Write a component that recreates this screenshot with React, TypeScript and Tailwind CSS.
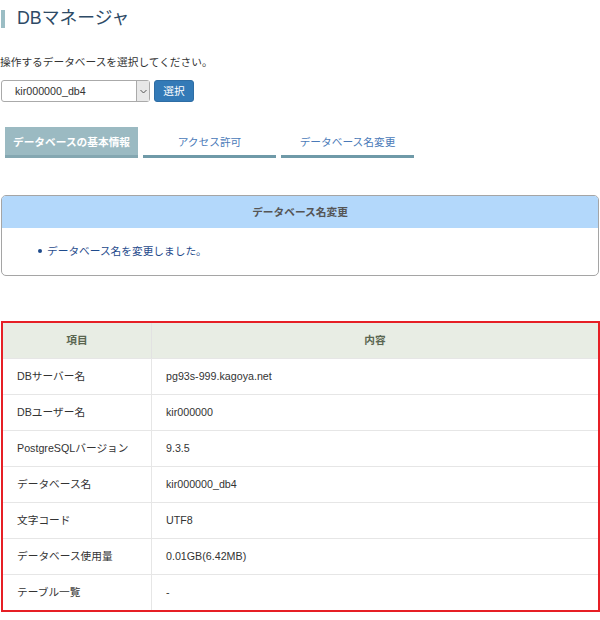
const ROWS: { label: string; value: string }[] = [
  { label: 'DBサーバー名', value: 'pg93s-999.kagoya.net' },
  { label: 'DBユーザー名', value: 'kir000000' },
  { label: 'PostgreSQLバージョン', value: '9.3.5' },
  { label: 'データベース名', value: 'kir000000_db4' },
  { label: '文字コード', value: 'UTF8' },
  { label: 'データベース使用量', value: '0.01GB(6.42MB)' },
  { label: 'テーブル一覧', value: '-' },
]

const TABS = ['データベースの基本情報', 'アクセス許可', 'データベース名変更']

export default function App() {
  return (
    <div
      className="w-[600px] h-[620px] bg-white text-[10.7px] text-[#333]"
      style={{ fontFamily: '"Liberation Sans", "Noto Sans CJK JP", sans-serif' }}
    >
      {/* タイトル */}
      <div className="h-[38px] flex items-center">
        <div className="ml-[1px] w-[4px] h-[18px] bg-[#9bbdc4]" />
        <h1 className="ml-[12px] text-[17.8px] leading-none text-[#2e4a66]">DBマネージャ</h1>
      </div>

      <p className="mt-[15px] leading-[18px]">操作するデータベースを選択してください。</p>

      {/* DB選択 */}
      <div className="mt-[9px] flex items-center gap-[4px]">
        <div className="ml-[1px] w-[149px] h-[22px] flex items-stretch border border-[#aaa] rounded-[3px] bg-white">
          <span className="flex-1 pl-[13px] leading-[20px] text-[#333]">kir000000_db4</span>
          <span className="w-[13px] border-l border-[#aaa] bg-[#e8e8e8] flex items-center justify-center">
            <svg width="7" height="5" viewBox="0 0 7 5">
              <path d="M0.5 1 L3.5 4 L6.5 1" fill="none" stroke="#555" strokeWidth="1" />
            </svg>
          </span>
        </div>
        <button className="w-[40px] h-[22px] rounded-[3px] bg-[#337ab7] border border-[#2e6da4] text-white leading-none">
          選択
        </button>
      </div>

      {/* タブ */}
      <div className="mt-[25px] ml-[5px] flex gap-[5px]">
        {TABS.map((tab, i) => (
          <div
            key={tab}
            className={
              i === 0
                ? 'w-[133px] h-[31px] pt-[2px] flex items-center justify-center bg-[#9bbac2] border-b-[3px] border-[#84a7b1] text-white font-bold'
                : 'w-[133px] h-[31px] pt-[2px] flex items-center justify-center border-b-[3px] border-[#6f9aa8] text-[#4a7ab8]'
            }
          >
            {tab}
          </div>
        ))}
      </div>

      {/* 結果パネル */}
      <div className="mt-[37px] ml-[1px] w-[598px] border border-[#a5a5a5] rounded-[5px] overflow-hidden">
        <div className="h-[32px] bg-[#b3d8fb] flex items-center justify-center text-[#555] font-semibold">
          データベース名変更
        </div>
        <ul className="h-[47px] flex items-center pl-[36px]">
          <li className="flex items-center text-[#1f4b8c]">
            <span className="w-[4px] h-[4px] rounded-full bg-[#1f4b8c] mr-[5px]" />
            データベース名を変更しました。
          </li>
        </ul>
      </div>

      {/* 基本情報テーブル */}
      <div className="mt-[45px] ml-[1px] w-[599px] border-2 border-[#e61f25]">
        <div className="h-[35px] flex bg-[#e8ede4] text-[#5a6650] font-bold">
          <div className="w-[149px] flex items-center justify-center border-r border-[#e2e2e2]">項目</div>
          <div className="flex-1 flex items-center justify-center">内容</div>
        </div>
        {ROWS.map((row) => (
          <div key={row.label} className="h-[36px] flex border-t border-[#e6e6e6]">
            <div className="w-[149px] flex items-center pl-[14px] border-r border-[#e6e6e6]">{row.label}</div>
            <div className="flex-1 flex items-center pl-[14px]">{row.value}</div>
          </div>
        ))}
      </div>
    </div>
  )
}
